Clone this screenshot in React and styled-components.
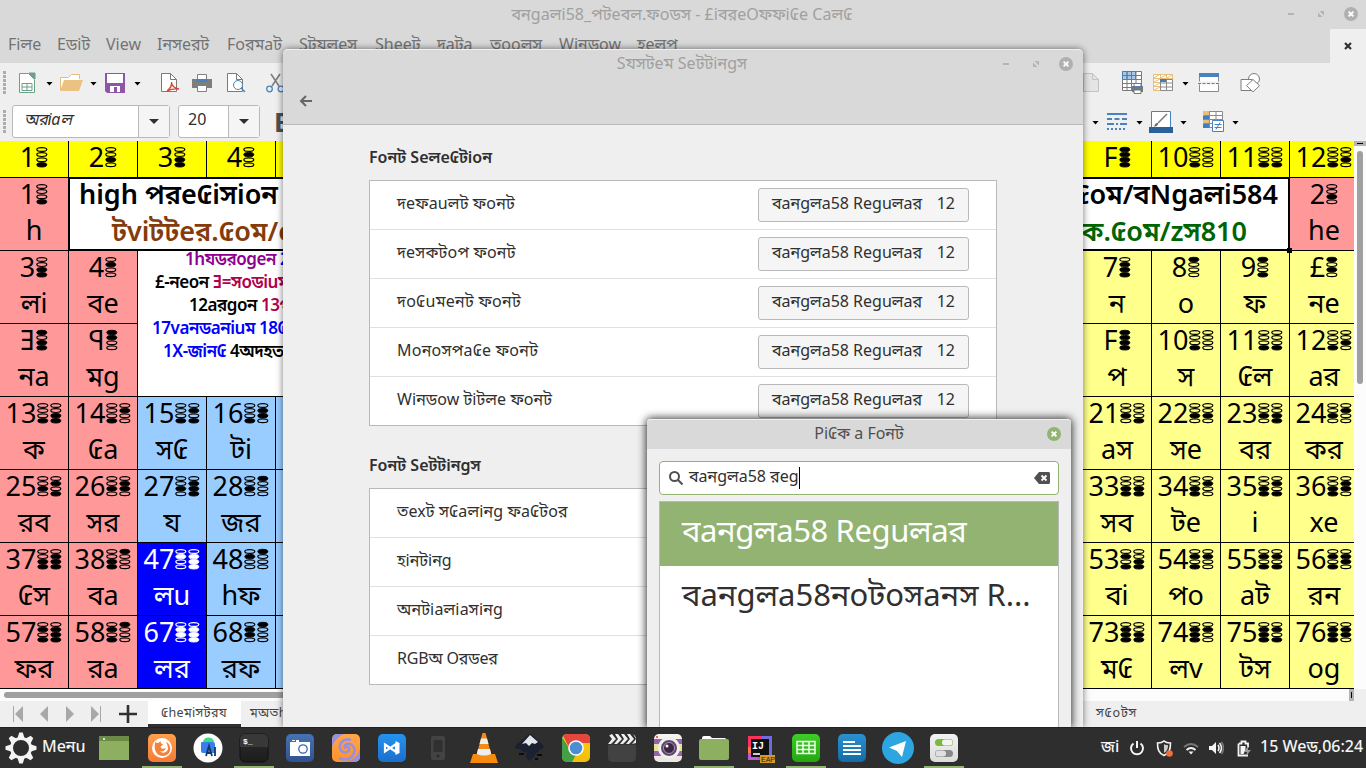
import React from "react";
import styled, { createGlobalStyle, css } from "styled-components";

const Global = createGlobalStyle`
  * { box-sizing: border-box; }
  body { margin: 0; background: #efefef; overflow: hidden; }
  #root { font-family: "Noto Sans", "Noto Sans Bengali", "Open Sans", sans-serif; font-size: 16px; color: #303030; }
`;

const Desktop = styled.div`
  position: relative; width: 1366px; height: 768px; overflow: hidden;
  display: flex; flex-direction: column; white-space: nowrap;
`;

/* ---------- spreadsheet window ---------- */
const Office = styled.div`height: 727px; display: flex; flex-direction: column; background: #efefef;`;
const OfficeTitle = styled.div`
  height: 29px; background: #d9d9d9; color: #a0a0a0; display: grid; grid-template-columns: 1fr auto 1fr;
  align-items: center; line-height: 26px; padding-bottom: 2px;
`;
const TitleText = styled.span`margin: 0 1px 0 -1px; letter-spacing: 0.06px;`;
const WinButtons = styled.div`
  display: flex; justify-content: flex-end; align-items: center; gap: 17px; padding-right: ${(p) => p.$pr}px; padding-bottom: ${(p) => p.$pb || 0}px; grid-column: 3;
`;
const MenuBar = styled.div`height: 34px; background: #d9d9d9; color: #737373; display: flex; padding-left: 8px; line-height: 30px;`;
const MenuItem = styled.span`width: ${(p) => p.$w}px; flex: none;`;
const DocClose = styled.div`
  margin-left: auto; width: 36px; height: 34px; background: #efefef; display: flex; align-items: center; justify-content: center;
`;
const ToolRow = styled.div`height: 39px; display: flex; align-items: center;`;
const ToolsRight = styled.div`display: flex; align-items: center; margin-left: auto; width: 283px;`;
const Slot = styled.span`
  display: flex; flex: none; justify-content: center; width: ${(p) => p.$w}px; margin-left: ${(p) => p.$ml || 0}px;
`;
const Handle = styled.span`
  width: 3px; height: 24px; margin-left: 3px; flex: none;
  background: repeating-linear-gradient(#adadad 0 3px, #efefef 3px 4px);
`;
const Caret = styled.span`
  flex: none; width: ${(p) => (p.$big ? 10 : 7)}px; height: ${(p) => (p.$big ? 5 : 4)}px; margin-left: ${(p) => p.$ml || 0}px; margin-top: ${(p) => (p.$big ? 0 : 2)}px;
  background: ${(p) => (p.$big ? "#303030" : "#000")}; clip-path: polygon(0 0, 100% 0, 50% 100%);
`;
const Combo = styled.div`
  display: flex; height: 33px; width: ${(p) => p.$w}px; margin-left: ${(p) => p.$ml}px; flex: none;
  border: 1px solid #b9b9b9; border-radius: 3px; background: #fff; line-height: 27px;
`;
const ComboText = styled.span`
  flex: 1; padding-left: ${(p) => p.$pl}px;
  ${(p) => p.$italic && css`font-style: italic; letter-spacing: -0.2px;`}
`;
const ComboArrow = styled.span`
  width: 31px; border-left: 1px solid #b9b9b9; background: #f5f5f5; display: flex; align-items: center; justify-content: center;
`;
const BoldButton = styled.span`font: 700 27px "Noto Sans", sans-serif; color: #505050; margin-left: 14px; line-height: 30px;`;

const SheetArea = styled.div`height: 548px; display: flex; background: #fff;`;
const Grid = styled.div`
  display: grid; grid-template-columns: ${(p) => p.$cols}; grid-template-rows: 37px repeat(7, 73px);
  width: ${(p) => p.$w}px; overflow: hidden; flex: none; color: #000; font-size: 27px;
`;
const GridGap = styled.div`flex: 1;`;
const Cell = styled.div`
  background: ${(p) => p.$bg}; color: ${(p) => p.$fg || "#000"};
  border-right: 1px solid #000; border-bottom: 1px solid #000;
`;
const NumberLine = styled.div`height: 34px; line-height: 32px; display: flex; justify-content: center; align-items: flex-start;`;
const SymbolLine = styled.div`height: 36px; line-height: 36px; text-align: center;`;
const Banner = styled.div`
  grid-column: span ${(p) => p.$span}; background: #fff; font-weight: 600;
  border-top: 1px solid #000; border-bottom: 2px solid #000; margin-left: ${(p) => (p.$side === "left" ? -1 : 0)}px;
  ${(p) => (p.$side === "left" ? "border-left: 2px solid #000;" : "border-right: 2px solid #000;")}
  display: flex; flex-direction: column; align-items: ${(p) => (p.$side === "left" ? "flex-start" : "flex-end")};
`;
const BannerLine = styled.div`
  height: 37px; flex: none; line-height: 29px; color: ${(p) => p.$c}; margin: ${(p) => (p.$right ? `0 ${p.$in}px 0 0` : `0 0 0 ${p.$in}px`)};
  &:last-child { height: 33px; }
`;
const Corner = styled.span`position: absolute; left: 1287px; top: 248px; width: 5px; height: 5px; background: #000;`;
const Notes = styled.div`
  grid-column: 3 / span 3; grid-row: 3 / span 2; background: #fff; border-bottom: 1px solid #000; font-size: 17px; font-weight: 600;
`;
const NoteLine = styled.div`height: 23px; line-height: 15px; padding-left: ${(p) => p.$in}px; letter-spacing: -0.45px;`;
const Ink = styled.span`color: ${(p) => p.$c};`;

const VScroll = styled.div`width: 12px; background: #fcfcfc; display: flex; flex-direction: column; align-items: center;`;
const VSplit = styled.div`width: 12px; height: 5px; background: #b4b4b4; display: flex; align-items: center; justify-content: center;
  &::after { content: ""; width: 6px; height: 1px; background: #000; }`;
const VThumb = styled.div`width: 6px; height: 233px; margin-top: 5px; background: #a0a0a0; border-radius: 3px;`;
const HScroll = styled.div`height: 12px; width: 1354px; background: #fcfcfc; display: flex; align-items: center;`;
const HThumb = styled.div`height: 6px; width: 1000px; margin-left: 4px; background: #a0a0a0; border-radius: 3px;`;
const HSplit = styled.div`margin-left: auto; width: 5px; height: 12px; background: #b4b4b4; display: flex; align-items: center; justify-content: center;
  &::after { content: ""; width: 1px; height: 6px; background: #000; }`;
const SheetTabs = styled.div`height: 26px; display: flex; align-items: center; font-size: 12.5px; color: #444;`;
const SheetTab = styled.div`
  height: 26px; line-height: 23px; width: ${(p) => p.$w}px; margin-left: ${(p) => p.$ml || 0}px; flex: none; letter-spacing: ${(p) => p.$ls || 0.35}px;
  padding-left: ${(p) => p.$pl || 0}px; ${(p) => p.$active && "background: #fff; border-bottom: 3px solid #303030;"}
`;

/* ---------- floating windows ---------- */
const Settings = styled.div`
  position: absolute; left: 283px; top: 49px; width: 800px; height: 678px; background: #efefef;
  border-radius: 5px 5px 0 0; box-shadow: 0 0 7px rgba(0, 0, 0, 0.55);
`;
const SettingsHead = styled.div`
  height: 76px; background: #d9d9d9; border-top: 1px solid #f0f0f0; border-bottom: 1px solid #b9b9b9; border-radius: 5px 5px 0 0;
`;
const SettingsTitle = styled.div`
  height: 28px; line-height: 26px; display: grid; grid-template-columns: 1fr auto 1fr; color: #a0a0a0;
`;
const BackRow = styled.div`height: 46px; display: flex; align-items: center; padding-left: 16px;`;
const SettingsBody = styled.div`padding: 0 86px;`;
const SectionTitle = styled.div`
  font-weight: 600; height: ${(p) => p.$h}px; padding-top: ${(p) => p.$pt}px; line-height: 22px;
`;
const List = styled.div`width: 628px; background: #fff; border: 1px solid #b9b9b9;`;
const Row = styled.div`
  height: 49px; display: flex; align-items: center; justify-content: space-between; padding: 0 27px; border-bottom: 1px solid #e0e0e0;
  &:last-child { border-bottom: 0; height: 48px; }
`;
const RowLabel = styled.span`line-height: 22px; padding-bottom: 4px; letter-spacing: ${(p) => p.$ls || 0}px;`;
const FontButton = styled.span`
  width: 211px; height: 34px; border: 1px solid #b9b9b9; border-radius: 3px; background: #f5f5f5;
  display: flex; justify-content: space-between; padding: 0 13px; line-height: 29px;
`;

const Dialog = styled.div`
  position: absolute; left: 647px; top: 419px; width: 424px; height: 308px; background: #efefef;
  border-radius: 4px 4px 0 0; box-shadow: 0 0 9px 1px rgba(0, 0, 0, 0.8);
`;
const DialogHead = styled.div`
  height: 30px; line-height: 26px; background: #d9d9d9; border-top: 1px solid #f0f0f0; border-radius: 4px 4px 0 0; color: #505050;
  display: grid; grid-template-columns: 1fr auto 1fr;
`;
const DialogBody = styled.div`padding: 12px 12px 0; height: 278px; display: flex; flex-direction: column; gap: 6px;`;
const Search = styled.div`
  height: 34px; border: 1px solid #92b372; border-radius: 4px; background: #fff; display: flex; align-items: center; padding: 0 8px 0 9px; flex: none;
`;
const SearchText = styled.span`margin-left: 6px; padding-bottom: 4px; line-height: 22px;`;
const Cursor = styled.span`width: 1px; height: 22px; background: #000;`;
const Spring = styled.span`flex: 1;`;
const Fonts = styled.div`flex: 1; border: 1px solid #b9b9b9; border-bottom: 0; background: #fff; font-size: 31px;`;
const FontItem = styled.div`
  height: 64px; line-height: 57px; padding-left: 22px; letter-spacing: ${(p) => p.$ls || 0}px;
  background: ${(p) => (p.$on ? "#92b372" : "#fff")}; color: ${(p) => (p.$on ? "#fff" : "#303030")};
`;

/* ---------- panel ---------- */
const Panel = styled.div`
  position: relative; height: 41px; background: #2e2e2e; border-top: 1px solid #222; color: #f4f4f4; display: flex; align-items: center; font-weight: 500;
`;
const MenuLabel = styled.span`width: 49px; margin-left: 5px; margin-bottom: 3px; font-size: 16px;`;
const App = styled.span`
  width: 46px; height: 40px; display: flex; align-items: center; justify-content: center; margin-right: ${(p) => p.$mr || 0}px; flex: none;
  background: ${(p) => (p.$run ? "linear-gradient(#92b372, #92b372) center bottom / 40px 2px no-repeat" : "none")};
`;
const Tray = styled.div`display: flex; align-items: center; margin-left: auto; width: 265px;`;
const TrayText = styled.span`width: ${(p) => p.$w}px; margin-left: ${(p) => p.$ml || 0}px; margin-bottom: 3px;`;

/* ---------- small drawings ---------- */
const bitsOf = (d) => [8, 4, 2, 1].map((b) => (d & b) !== 0);
const OvalStack = styled.svg`flex: none; margin-top: 3px;`;
const Ovals = ({ value }) => (
  <OvalStack width="13" height="24" viewBox="0 0 13 24">
    {bitsOf(value).map((on, i) => (
      <ellipse key={i} cx="6.800" cy={5.500 + i * 5.100} rx="5" ry={on ? 2.200 : 1.900} fill={on ? "currentColor" : "none"} stroke="currentColor" strokeWidth={on ? 0.900 : 1.200} />
    ))}
  </OvalStack>
);
const CloseDot = ({ color, size = 14 }) => (
  <svg width={size} height={size} viewBox="0 0 14 14">
    <circle cx="7" cy="7" r="7" fill={color} />
    <path d="M4.600 4.600l4.800 4.800M9.400 4.600L4.600 9.400" stroke="#fff" strokeWidth="1.900" />
  </svg>
);
const Controls = ({ pr }) => (
  <WinButtons $pr={pr}>
    <svg width="14" height="14"><path d="M4 7h6" stroke="#b0b0b0" strokeWidth="1.800" /></svg>
    <svg width="12" height="14"><path d="M4.500 4h4.500v4.500zM3 5.500v4.500h4.500z" fill="#b4b4b4" /></svg>
    <CloseDot color="#b0b0b0" />
  </WinButtons>
);

const NewSheet = () => (
  <svg width="18" height="22" viewBox="0 0 18 22" fill="none" stroke="#6aa188"><path d="M1.500 1.500h9l6 6v13h-15z" fill="#fff" /><path d="M11 1h6v6z" fill="#6aa188" /><path d="M4 11.500h10v7H4zM4 15h10M9 11.500v7" /></svg>
);
const OpenFolder = () => (
  <svg width="24" height="20" viewBox="0 0 24 20"><path d="M1.500 17V4.500h8l3-3h8V6" fill="#fff" stroke="#e8bf7a" /><path d="M1 18L5 7h19l-4 11z" fill="#ecc283" /></svg>
);
const Save = () => (
  <svg width="20" height="20" viewBox="0 0 20 20"><path d="M0 0h20v20H2l-2-2z" fill="#8e55a8" /><path d="M2 1h16v9H2zM5 13h10v6H5z" fill="#fff" /><path d="M9 14h3v5H9z" fill="#8e55a8" /></svg>
);
const Page = ({ children, muted }) => (
  <svg width="22" height="22" viewBox="0 0 22 22" fill="none"><path d="M2.500 1.500h9l6 6v12h-15z" fill={muted ? "#e4e4e4" : "#fff"} stroke={muted ? "#c2c2c2" : "#7a7a7a"} /><path d="M11.500 1.500v6h6" stroke={muted ? "#c2c2c2" : "#7a7a7a"} />{children}</svg>
);
const Printer = () => (
  <svg width="20" height="20" viewBox="0 0 20 20"><path d="M5.500 7V1.500h9V7" fill="#fff" stroke="#808080" /><path d="M0 6h20v9H0z" fill="#7d7d7d" /><path d="M4 6h12v3H4z" fill="#4a82bd" /><path d="M5.500 12.500h9v6h-9z" fill="#fff" stroke="#808080" /></svg>
);
const Scissors = () => (
  <svg width="22" height="22" viewBox="0 0 22 22" fill="none"><path d="M6 2l8 12M15 2L7 14" stroke="#7d7d7d" strokeWidth="1.600" /><circle cx="4.500" cy="17" r="2.800" stroke="#4a82bd" strokeWidth="1.300" /><circle cx="16" cy="17" r="2.800" stroke="#4a82bd" strokeWidth="1.300" /></svg>
);
const TablePrint = () => (
  <svg width="22" height="23" viewBox="0 0 22 23" fill="none"><path d="M1.500.5h19v19h-19z" fill="#fff" stroke="#7a7a7a" /><path d="M1.500.5h13v8h-13z" fill="#a9c8e8" stroke="#4a7fb5" /><path d="M1.500 4.500h19M1.500 8.500h19M1.500 12.500h19M1.500 16.500h19M6 .5v19M10.500.5v19M15 .5v19" stroke="#7a7a7a" /><path d="M1.500 4.500h13M6 .5v8M10.500.5v8" stroke="#4a7fb5" /><path d="M11 15h11v6H11z" fill="#777" /><path d="M13 12.500h7v3h-7zM13 19h7v3.500h-7z" fill="#fff" stroke="#777" /><path d="M13 15h7v2h-7z" fill="#4a82bd" /></svg>
);
const Freeze = () => (
  <svg width="21" height="19" viewBox="0 0 21 19" fill="none"><path d="M.5 1.500h19v16H.5z" fill="#fff" stroke="#e8bf7a" /><path d="M.5 5.500h19M.5 9.500h7M.5 13.500h7M7.500 1.500v16M13.500 1.500v4M1 5l5-3M8 5l5-3M14 5l5-3M1 9l6-3M1 13l6-3M1 17l6-3" stroke="#e8bf7a" /><path d="M7.500 6.500h12v11h-12zM13.500 6v11M7.500 10h12M7.500 14h12" stroke="#8a8a8a" /><path d="M7 6h6v3H7z" fill="#3f7fc0" /></svg>
);
const SplitWin = () => (
  <svg width="22" height="20" viewBox="0 0 22 20" fill="none"><path d="M1.500 1.500h19v17h-19z" fill="#fff" stroke="#8a8a8a" /><path d="M1 0h20v4H1z" fill="#4a82bd" /><path d="M0 10h22" stroke="#efefef" strokeWidth="3" /><path d="M0 10.500h22" stroke="#4a82bd" strokeDasharray="3 1.500" /></svg>
);
const Shapes = () => (
  <svg width="21" height="20" viewBox="0 0 21 20" fill="#fff" stroke="#7d7d7d"><circle cx="14" cy="6" r="5.500" /><path d="M1 6.500h11v11H1z" /><path d="M13 6.500l6.500 6.200-6.500 6.200-6.500-6.200z" /></svg>
);
const Lines = () => (
  <svg width="20" height="18" viewBox="0 0 20 18" stroke="#4a82bd" strokeWidth="2"><path d="M0 1h20" /><path d="M0 6h20" strokeDasharray="5 2.500" /><path d="M0 11h20" strokeDasharray="7 2 2 2" /><path d="M0 16h20" strokeDasharray="2 2" /></svg>
);
const BorderPen = () => (
  <svg width="24" height="22" viewBox="0 0 24 22"><path d="M2.500.5h19V17h-19z" fill="#fff" stroke="#4a82bd" /><path d="M0 16h24v6H0z" fill="#2a6099" /><path d="M18 3l-9 9" stroke="#777" strokeWidth="1.500" /><path d="M4 15.500c2 0 2-4 4.500-3.500 2 1-1 4-4.500 3.500z" fill="#666" /></svg>
);
const Conditional = () => (
  <svg width="21" height="21" viewBox="0 0 21 21" fill="none"><path d="M.5.5h19v16H.5z" fill="#fff" stroke="#8a8a8a" /><path d="M0 0h6v5H0zM0 9h6v4H0z" fill="#e8bf7a" /><path d="M0 5h6v4H0zM0 13h6v4H0z" fill="#3f7fc0" /><path d="M.5 4.500h19M.5 8.500h19M.5 12.500h19M6.500.5v16M13 .5v9" stroke="#8a8a8a" /><path d="M9.500 9.500h11v11h-11z" fill="#fff" stroke="#4a82bd" /><path d="M11.500 13.500h7M11.500 16.500h7M17 11.500l-4 7" stroke="#4a82bd" /></svg>
);
const SheetNav = () => (
  <svg width="90" height="16" viewBox="0 0 90 16" fill="#a8a8a8"><path d="M0 0h1v16H0zM10 0v16L2 8zM35 0v16l-8-8zM53 0v16l8-8zM78 0v16l8-8zM87 0h1v16h-1z" /></svg>
);
const Gear = () => (
  <svg width="32" height="32" viewBox="-16 -16 32 32"><circle r="9.500" fill="none" stroke="#f4f4f4" strokeWidth="3" />{[0, 45, 90, 135, 180, 225, 270, 315].map((a) => <path key={a} transform={`rotate(${a})`} d="M-3.500-10L-1.800-15.500h3.600L3.500-10z" fill="#f4f4f4" />)}</svg>
);
const Files = ({ tab }) => (
  <svg width="30" height="26" viewBox="0 0 30 26">{tab ? <><path d="M3 8V3q0-2 2-2h6l2 2h13q1 0 1 2v3z" fill="#fff" /><path d="M0 6q0-2 2-2h26q2 0 2 2v17q0 2-2 2H2q-2 0-2-2z" fill="#8cb05f" /></> : <><path d="M0 1h30v24H0z" fill="#8cb05f" /><path d="M0 1h30v5H0z" fill="#6b8a45" /><circle cx="5" cy="4" r="1" fill="#fff" /></>}</svg>
);
const Tile = ({ from, to, id, children, edge }) => (
  <svg width="30" height="30" viewBox="0 0 30 30">
    <defs>
      <linearGradient id={id} x1="0" y1="0" x2="0" y2="1"><stop offset="0" stopColor={from} /><stop offset="1" stopColor={to} /></linearGradient>
      <clipPath id={`${id}-clip`}><rect x="1" y="1" width="28" height="28" rx="5" /></clipPath>
    </defs>
    <rect x="1" y="1" width="28" height="28" rx="5" fill={`url(#${id})`} stroke={edge || "none"} />
    <g clipPath={`url(#${id}-clip)`}>{children}</g>
  </svg>
);

/* ---------- data ---------- */
const PINK = "#ff9999", BLUE = "#99ccff", DEEP = "#0000ff", YELLOW = "#ffff00", CREAM = "#ffff8c";
const hex = { "£": 10, "Ǝ": 11, "ꟼ": 12, F: 15 };
const digits = (n) => [...n].map((c) => hex[c] ?? Number(c));

const NumberText = ({ n }) => (
  <NumberLine>
    <span>{n}</span>
    {digits(n).map((d, i) => <Ovals key={i} value={d} />)}
  </NumberLine>
);
const Element = ({ n, s, bg, fg }) => (
  <Cell $bg={bg} $fg={fg}>
    <NumberText n={n} />
    {s && <SymbolLine>{s}</SymbolLine>}
  </Cell>
);

const leftRows = [
  [["13", "ক"], ["14", "₢a"], ["15", "স₢"], ["16", "টi"]],
  [["25", "রব"], ["26", "সর"], ["27", "য"], ["28", "জর"]],
  [["37", "₢স"], ["38", "বa"], ["47", "লu"], ["48", "hফ"]],
  [["57", "ফর"], ["58", "রa"], ["67", "লর"], ["68", "রফ"]],
];
const rightRows = [
  [["7", "ন"], ["8", "o"], ["9", "ফ"], ["£", "নe"]],
  [["F", "প"], ["10", "স"], ["11", "₢ল"], ["12", "aর"]],
  [["21", "aস"], ["22", "সe"], ["23", "বর"], ["24", "কর"]],
  [["33", "সব"], ["34", "টe"], ["35", "i"], ["36", "xe"]],
  [["53", "বi"], ["54", "পo"], ["55", "aট"], ["56", "রন"]],
  [["73", "ম₢"], ["74", "লv"], ["75", "টস"], ["76", "og"]],
];
const menus = [["Fiলe", 49], ["Eডiট", 49], ["View", 51], ["Iনসeরট", 70], ["Foরমaট", 72], ["Sটযলeস", 76], ["Sheeট", 62], ["দaটa", 53], ["তooলস", 69], ["Wiনডow", 78], ["হeলপ", 50]];
const fontRows = [["দeফauলট ফoনট", 0.15], ["দeসকটoপ ফoনট", 0.2], ["দo₢uমeনট ফoনট", 0.28], ["Moনoসপa₢e ফoনট", 0.25], ["Wiনডow টiটলe ফoনট", 0.06]];
const settingRows = [["তexট স₢aলiনg ফa₢টoর", 0.12], ["হiনটiনg", 0], ["অনটiaলiaসiনg", 0.15], ["RGBঅ Oরডeর", -0.18]];

const LeftSheet = () => (
  <Grid $w={283} $cols="repeat(5, 69px)">
    {["1", "2", "3", "4"].map((n) => <Element key={n} n={n} bg={YELLOW} />)}
    <Cell $bg={YELLOW} />
    <Element n="1" s="h" bg={PINK} />
    <Banner $span={4} $side="left">
      <BannerLine $c="#000" $in={9}>high পরe₢iসioন</BannerLine>
      <BannerLine $c="#843c0c" $in={42}>টviটটeর.₢oম/e</BannerLine>
    </Banner>
    <Element n="3" s="লi" bg={PINK} />
    <Element n="4" s="বe" bg={PINK} />
    <Notes>
      <NoteLine $in={47}><Ink $c="#8e008e">1hযডরogeন</Ink> <Ink $c="#00f">2</Ink></NoteLine>
      <NoteLine $in={17}>£-নeoন <Ink $c="#b0004e">Ǝ=সoডiuম</Ink></NoteLine>
      <NoteLine $in={51}>12aরgoন <Ink $c="#b0004e">13প</Ink></NoteLine>
      <NoteLine $in={14}><Ink $c="#00f">17vaনডaনiuম 18₢</Ink></NoteLine>
      <NoteLine $in={25}><Ink $c="#00f">1X-জiন₢</Ink> 4অদহত</NoteLine>
    </Notes>
    <Element n="Ǝ" s="নa" bg={PINK} />
    <Element n="ꟼ" s="মg" bg={PINK} />
    {leftRows.map((r, i) => (
      <React.Fragment key={i}>
        {r.map(([n, s], j) => {
          const deep = i > 1 && j === 2;
          return <Element key={n} n={n} s={s} bg={deep ? DEEP : j < 2 ? PINK : BLUE} fg={deep ? "#fff" : "#000"} />;
        })}
        <Cell $bg={BLUE} />
      </React.Fragment>
    ))}
  </Grid>
);

const RightSheet = () => (
  <Grid $w={271} $cols="repeat(4, 69px)">
    {["F", "10", "11", "12"].map((n) => <Element key={n} n={n} bg={YELLOW} />)}
    <Banner $span={3} $side="right">
      <BannerLine $c="#000" $right $in={10}>₢oম/বNgaলi584</BannerLine>
      <BannerLine $c="#006400" $right $in={41}>ক.₢oম/zস810</BannerLine>
    </Banner>
    <Element n="2" s="he" bg={PINK} />
    {rightRows.flatMap((r) => r.map(([n, s]) => <Element key={n} n={n} s={s} bg={CREAM} />))}
  </Grid>
);

const OfficeWindow = () => (
  <Office>
    <OfficeTitle>
      <span />
      <TitleText>বনgaলi58_পটeবল.ফoডস - £iবরeOফফi₢e Caল₢</TitleText>
      <Controls pr={8} />
    </OfficeTitle>
    <MenuBar>
      {menus.map(([m, w]) => <MenuItem key={m} $w={w}>{m}</MenuItem>)}
      <DocClose><svg width="8" height="8"><path d="M1 1l6 6M7 1L1 7" stroke="#303030" strokeWidth="2.200" /></svg></DocClose>
    </MenuBar>
    <ToolRow>
      <Handle />
      <Slot $w={18} $ml={12}><NewSheet /></Slot><Caret $ml={10} />
      <Slot $w={24} $ml={6}><OpenFolder /></Slot><Caret $ml={7} />
      <Slot $w={20} $ml={8}><Save /></Slot><Caret $ml={9} />
      <Slot $w={22} $ml={18}><Page><path d="M8 19c4-3 5-6 4.500-9 0 4 3 6 7.500 7-5-.5-9 .5-12 2z" stroke="#d9452b" strokeWidth="1.300" /></Page></Slot>
      <Slot $w={20} $ml={11}><Printer /></Slot>
      <Slot $w={22} $ml={13}><Page><circle cx="13" cy="13" r="4.500" stroke="#4a82bd" fill="#fff" /><path d="M16 16l4 4" stroke="#4a82bd" strokeWidth="1.500" /></Page></Slot>
      <Slot $w={22} $ml={18}><Scissors /></Slot>
      <ToolsRight>
        <Slot $w={22} $ml={-2}><Page muted /></Slot>
        <Slot $w={22} $ml={18}><TablePrint /></Slot>
        <Slot $w={21} $ml={10}><Freeze /></Slot><Caret $ml={8} />
        <Slot $w={22} $ml={9}><SplitWin /></Slot>
        <Slot $w={21} $ml={20}><Shapes /></Slot>
      </ToolsRight>
    </ToolRow>
    <ToolRow>
      <Handle />
      <Combo $w={158} $ml={6}><ComboText $pl={11} $italic>অরiaল</ComboText><ComboArrow><Caret $big /></ComboArrow></Combo>
      <Combo $w={82} $ml={8}><ComboText $pl={9}>20</ComboText><ComboArrow><Caret $big /></ComboArrow></Combo>
      <BoldButton>B</BoldButton>
      <ToolsRight>
        <Caret $ml={9} />
        <Slot $w={20} $ml={8}><Lines /></Slot><Caret $ml={9} />
        <Slot $w={24} $ml={6}><BorderPen /></Slot><Caret $ml={7} />
        <Slot $w={21} $ml={16}><Conditional /></Slot><Caret $ml={8} />
      </ToolsRight>
    </ToolRow>
    <SheetArea>
      <LeftSheet />
      <GridGap />
      <RightSheet />
      <VScroll><VSplit /><VThumb /></VScroll>
    </SheetArea>
    <HScroll><HThumb /><HSplit /></HScroll>
    <SheetTabs>
      <Slot $w={90} $ml={13}><SheetNav /></Slot>
      <Slot $w={18} $ml={16}><svg width="18" height="18"><path d="M9 0v18M0 9h18" stroke="#303030" strokeWidth="2.600" /></svg></Slot>
      <SheetTab $active $w={93} $ml={11} $pl={13}>₢heমiসটরয</SheetTab>
      <SheetTab $w={40} $pl={9}>মঅতh</SheetTab>
      <SheetTab $w={60} $ml={815} $ls={0.8}>স₢oটস</SheetTab>
    </SheetTabs>
  </Office>
);

const SettingsWindow = () => (
  <Settings>
    <SettingsHead>
      <SettingsTitle><span /><TitleText>Sযসটeম Seটটiনgস</TitleText><Controls pr={10} /></SettingsTitle>
      <BackRow><svg width="14" height="12" fill="none" stroke="#666" strokeWidth="2"><path d="M13 6H2M7 1L2 6l5 5" /></svg></BackRow>
    </SettingsHead>
    <SettingsBody>
      <SectionTitle $h={55} $pt={21}>Foনট Seলe₢টioন</SectionTitle>
      <List>
        {fontRows.map(([r, ls]) => (
          <Row key={r}><RowLabel $ls={ls}>{r}</RowLabel><FontButton><span>বaনgলa58 Reguলaর</span><span>12</span></FontButton></Row>
        ))}
      </List>
      <SectionTitle $h={62} $pt={28}>Foনট Seটটiনgস</SectionTitle>
      <List>{settingRows.map(([r, ls]) => <Row key={r}><RowLabel $ls={ls}>{r}</RowLabel></Row>)}</List>
    </SettingsBody>
  </Settings>
);

const FontDialog = () => (
  <Dialog>
    <DialogHead>
      <span /><span>Pi₢ক a Foনট</span>
      <WinButtons $pr={10} $pb={1}><CloseDot color="#92b372" /></WinButtons>
    </DialogHead>
    <DialogBody>
      <Search>
        <svg width="14" height="14" fill="none" stroke="#505050" strokeWidth="2"><circle cx="5.500" cy="5.500" r="4.500" /><path d="M9 9l4.500 4.500" /></svg>
        <SearchText>বaনgলa58 রeg</SearchText><Cursor /><Spring />
        <svg width="16" height="12"><path d="M5 0h10l1 1v10l-1 1H5L0 6z" fill="#505050" /><path d="M7.500 3.500l5 5M12.500 3.500l-5 5" stroke="#fff" strokeWidth="1.800" /></svg>
      </Search>
      <Fonts>
        <FontItem $on $ls={-0.4}>বaনgলa58 Reguলaর</FontItem>
        <FontItem $ls={-0.03}>বaনgলa58নoটoসaনস R...</FontItem>
      </Fonts>
    </DialogBody>
  </Dialog>
);

const Taskbar = () => (
  <Panel>
    <Slot $w={32} $ml={5}><Gear /></Slot>
    <MenuLabel>Meনu</MenuLabel>
    <App $mr={2}><Files /></App>
    <App $run>
      <Tile id="fox" from="#ffa04d" to="#f57a35">
        <circle cx="15" cy="15" r="10" fill="#fff" />
        <path d="M8 9c1 1 2 1 3 1l3-2c-1 2 0 3 2 3-1 2-3 2-2 4 1 1 3 1 5 0-1 3-4 4-6 3 2 3 7 2 8-2 0-3-1-5-2-7 3 1 5 5 4 9-2 6-11 7-14 1-2-4-1-7-1-10z" fill="#f5813a" />
      </Tile>
    </App>
    <App><svg width="30" height="30"><circle cx="15" cy="15" r="14.500" fill="#fff" /><path d="M10 9a5.500 4.500 0 0111 0z" fill="#3ddc84" /><path d="M8 10q0-1 1-1h11q2 0 2 2v9H10q-2 0-2-2z" fill="#3b7ded" /><path d="M13 23l3-10 3 10M14 20h4M22 14v9" stroke="#12395f" strokeWidth="1.800" fill="none" /></svg></App>
    <App $run><Tile id="term" from="#2e2e2e" to="#1c1c1c" edge="#111"><path d="M1 1h28v13H1z" fill="#383838" /><text x="4" y="11" fontSize="8" fontFamily="Liberation Mono" fontWeight="700" fill="#fff">$_</text></Tile></App>
    <App><Tile id="shot" from="#4672b4" to="#30538f"><path d="M5 9h6V7h3v2h11v14H5z" fill="#fff" /><path d="M7 7h3v1H7z" fill="#fff" /><circle cx="18" cy="16" r="4.200" fill="#fff" stroke="#3b64a8" strokeWidth="1.300" /></Tile></App>
    <App><Tile id="swirl" from="#ffa64a" to="#ff9230"><path d="M1 1h12Q4 5 1 14zM29 16v13H14q12-2 15-13z" fill="#9a8fd8" /><path d="M15 14c2-1 4 1 3 3-2 4-8 3-9-2-1-6 5-10 11-8M15 15c-2 0-2-3 1-4 5-1 9 4 7 9-2 6-9 8-15 5" stroke="#9a8fd8" strokeWidth="2.600" fill="none" /></Tile></App>
    <App><Tile id="code" from="#2493f0" to="#1a6fca"><path d="M8 11.500l11 7.500V11L8 18.500z" fill="none" stroke="#fff" strokeWidth="2.200" /><path d="M18.500 8l4 2v10l-4 2z" fill="#fff" /></Tile></App>
    <App><svg width="14" height="24"><rect width="14" height="24" rx="2" fill="#434343" /><path d="M2.500 4h9v12h-9z" fill="#303030" /><circle cx="7" cy="20" r="1.500" fill="#2b2b2b" /></svg></App>
    <App><svg width="28" height="32" viewBox="0 0 28 32"><path d="M3 22h22l3 9H0z" fill="#f88b0c" /><path d="M12.500 1h3L22 25q-8 4-16 0z" fill="#f58a16" /><path d="M11 6.500h6l1.500 5.500h-9zM8 17h12l1.200 5q-7 3-14.400 0z" fill="#eee" /></svg></App>
    <App><svg width="30" height="28" viewBox="0 0 30 28"><path d="M14 0q1-1 2 0l12 11q3 4-5 5 3 2-2 3l-2 4-5 4-4-5 2-3-6-2q3-1-2-2-6 0-3-4z" fill="#1b2130" /><path d="M15 1l8 7-3 2-3-1-3 3-3-3-4 1z" fill="#e2e5ea" /><path d="M4 20h5M22 21h5M20 25h3" stroke="#0a0a0a" strokeWidth="2" /></svg></App>
    <App><Tile id="web" from="#f8cf18" to="#f3bd08"><path d="M1 1h28v9H15l-5 8z" fill="#e5473c" /><path d="M1 4l9 14 6 2-5 9H1z" fill="#43a047" /><circle cx="15" cy="15" r="7.800" fill="#fff" /><circle cx="15" cy="15" r="6.300" fill="#4a8fd6" /></Tile></App>
    <App><Tile id="clap" from="#2b2b2b" to="#434343"><path d="M1 1h4l4 5-5 5H1l4-5zM8 1h3l4 5-5 5H7l4-5zM14 1h3l4 5-5 5h-3l4-5zM20 1h3l4 5-5 5h-3l4-5zM26 1h3v9l-4 1 4-5z" fill="#eee" /><path d="M1 12h28v17H1z" fill="#424242" /></Tile></App>
    <App><Tile id="cam" from="#f6f4ee" to="#e9e7e0"><path d="M1 6h28v5H1zM1 18h28v5H1z" fill="#9463b0" /><path d="M1 11h28v7H1z" fill="#e9e39a" /><circle cx="16" cy="15" r="11" fill="#eee" /><circle cx="16" cy="15" r="8.500" fill="#5b4b66" stroke="#fff" /><circle cx="16" cy="15" r="5.500" fill="#3c2546" stroke="#a794b4" /><circle cx="14" cy="13" r="1.500" fill="#fff" /><circle cx="4" cy="4" r="1" fill="#e33" /></Tile></App>
    <App $run><Files tab /></App>
    <App><svg width="30" height="30" viewBox="0 0 30 30"><path d="M3 3h24v24H3z" fill="#6f6be0" /><path d="M3 3h13v6L3 20z" fill="#fe315d" /><path d="M3 15v12h12z" fill="#c05ad0" /><path d="M3 14h3v6H3z" fill="#f97a3d" /><path d="M6 6h18v18H6z" fill="#111" /><text x="7" y="15.500" fontSize="10" fontFamily="Liberation Mono" fontWeight="700" fill="#fff">IJ</text><path d="M8 20h7v2H8z" fill="#ccc" /><path d="M15 22h15v8H15z" fill="#d69a28" /><text x="16" y="28.700" fontSize="7" fontFamily="Liberation Sans" fill="#222">EAP</text></svg></App>
    <App $run><Tile id="calc" from="#3bd024" to="#25a60f"><path d="M6 8.500h18v12H6zM6 12.500h18M6 16.500h18M12 8.500v12M18 8.500v12" fill="none" stroke="#fff" strokeWidth="1.400" /></Tile></App>
    <App><Tile id="write" from="#2b90d0" to="#136ba6"><path d="M6 9h12M6 13h18M6 17h18M6 21h18" stroke="#fff" strokeWidth="2" /></Tile></App>
    <App><svg width="32" height="32"><circle cx="16" cy="16" r="16" fill="#2ca5e0" /><path d="M7 15.500L24 9l-4 16-5-6z" fill="#fff" /></svg></App>
    <App $run><Tile id="prefs" from="#f2f2f2" to="#dcdcdc"><rect x="6" y="6" width="18" height="7" rx="3.500" fill="#7cb83c" /><rect x="13" y="6.500" width="10.500" height="6" rx="3" fill="#f4f4f4" /><rect x="6" y="17" width="18" height="7" rx="3.500" fill="#888" /><rect x="6.500" y="17.500" width="10.500" height="6" rx="3" fill="#e0e0e0" /></Tile></App>
    <Tray>
      <TrayText $w={28}>জi</TrayText>
      <Slot $w={16}><svg width="16" height="16" fill="none" stroke="#f4f4f4" strokeWidth="2"><path d="M4.500 3.500a6 6 0 107 0M8 1v7" /></svg></Slot>
      <Slot $w={18} $ml={11}><svg width="18" height="17"><path d="M8 1c2 2 4 2 6.500 2 0 6-1 10-6.500 12.500C2.500 13 1.500 9 1.500 3 4 3 6 3 8 1z" fill="none" stroke="#f4f4f4" strokeWidth="1.600" /><path d="M8 4c1 1 2 1 4 1 0 4-1 6-4 8z" fill="#ccc" /><circle cx="13.500" cy="13.500" r="3.300" fill="#f0703a" /></svg></Slot>
      <Slot $w={16} $ml={9}><svg width="16" height="13" fill="none" strokeWidth="1.800"><path d="M1 5q7-6 14 0" stroke="#777" /><path d="M3.500 8q4.500-4 9 0" stroke="#f4f4f4" /><path d="M5.500 9.500h5L8 12.500z" fill="#f4f4f4" /></svg></Slot>
      <Slot $w={16} $ml={9}><svg width="16" height="14" fill="none" strokeWidth="1.600"><path d="M1 5h3l4-4v12L4 9H1z" fill="#f4f4f4" /><path d="M10 4q2 3 0 6M11.500 2q4 5 0 10" stroke="#f4f4f4" /><path d="M13.500 1q4 6 0 12" stroke="#777" /></svg></Slot>
      <Slot $w={16} $ml={12}><svg width="16" height="17" fill="none"><path d="M3 3.500h2.500V1.500h4v2H12v4M12 15.500H2.500V3.500" stroke="#f4f4f4" strokeWidth="1.800" /><path d="M4.500 6h5v4l-2 4h-3z" fill="#f4f4f4" /><path d="M12 6l-4 6h3l-1 4 5-6h-3z" fill="#999" /></svg></Slot>
      <TrayText $w={106} $ml={8}>15 Weড,06:24</TrayText>
    </Tray>
  </Panel>
);

export default function Screen() {
  return (
    <Desktop>
      <Global />
      <OfficeWindow />
      <Corner />
      <SettingsWindow />
      <FontDialog />
      <Taskbar />
    </Desktop>
  );
}
